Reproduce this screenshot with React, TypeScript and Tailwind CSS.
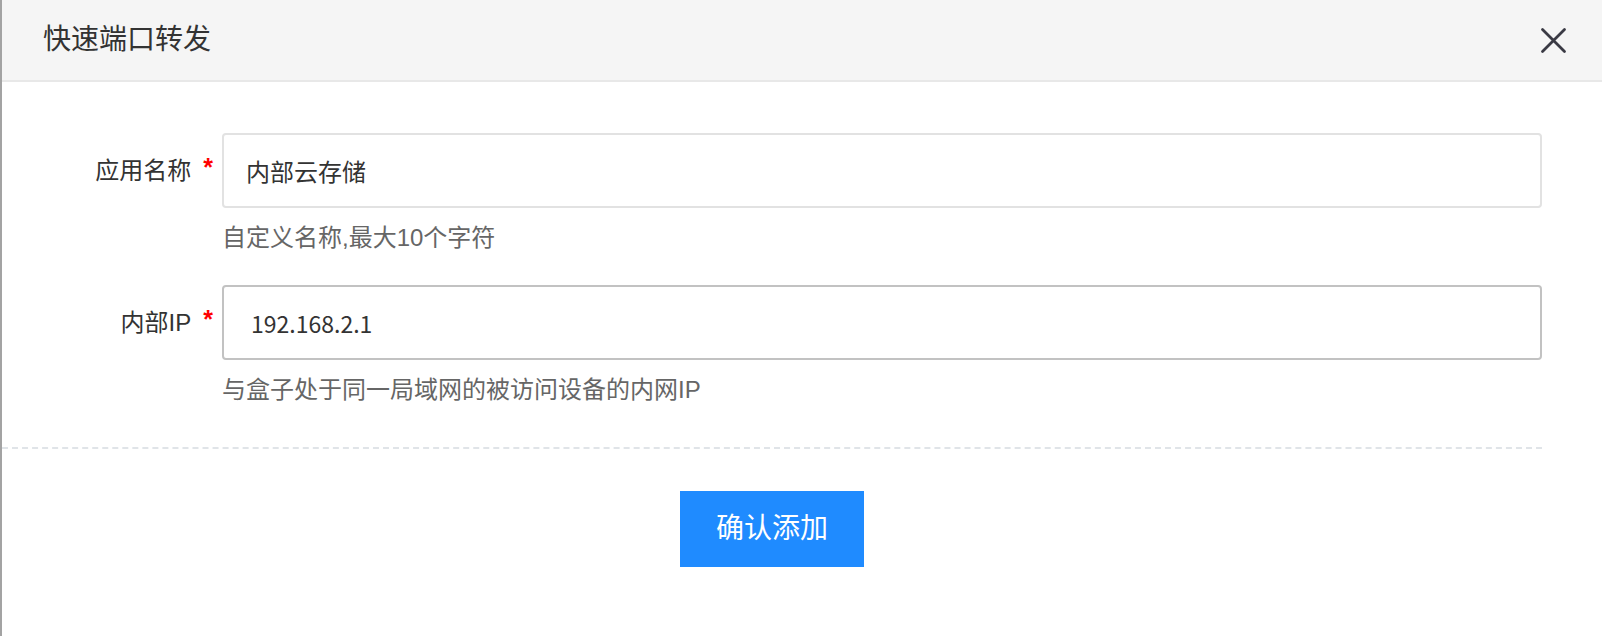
import { useState } from "react";

const Field = ({
  label,
  value,
  hint,
  inputClass,
}: {
  label: string;
  value: string;
  hint: string;
  inputClass: string;
}) => {
  return (
    <div className="flex">
      <div className="w-[220px] shrink-0 h-[75px] flex items-center justify-end pr-[9px]">
        <span className="text-[24px] text-[#333]">{label}</span>
        <span className="self-start mt-[22px] ml-[12px] text-[25px] font-bold leading-none text-[#ff0000]">*</span>
      </div>
      <div className="flex-1">
        <input
          readOnly
          value={value}
          className={`w-full h-[75px] rounded-[4px] border-2 bg-white text-[#333] outline-none ${inputClass}`}
        />
        <div className="mt-[15px] h-[30px] leading-[30px] text-[24px] text-[#666]">{hint}</div>
      </div>
    </div>
  );
};

export default function App() {
  const [name] = useState("内部云存储");
  const [ip] = useState("192.168.2.1");

  return (
    <div className="min-h-screen h-[636px] bg-white border-l-2 border-[#a3a3a3] font-['Liberation_Sans','Noto_Sans_CJK_SC',sans-serif]">
      <header className="h-[82px] bg-[#f5f5f5] border-b-2 border-[#e8e8e8] flex items-center justify-between pl-[41px] pr-[35px]">
        <h1 className="text-[28px] text-[#333]">快速端口转发</h1>
        <button className="w-[27px] h-[27px] flex items-center justify-center">
          <svg width="27" height="27" viewBox="0 0 27 27">
            <path d="M2.5 2.5 L24.5 24.5 M24.5 2.5 L2.5 24.5" stroke="#3a3a44" strokeWidth="2.8" strokeLinecap="round" />
          </svg>
        </button>
      </header>

      <div className="pt-[51px] pr-[60px]">
        <div className="flex flex-col gap-[32px]">
          <Field
            label="应用名称"
            value={name}
            hint="自定义名称,最大10个字符"
            inputClass="border-[#e2e2e2] px-[22px] text-[24px]"
          />
          <Field
            label="内部IP"
            value={ip}
            hint="与盒子处于同一局域网的被访问设备的内网IP"
            inputClass="border-[#c2c2c2] px-[27px] text-[23px] font-['Noto_Sans_CJK_SC',sans-serif]"
          />
        </div>
        <div className="mt-[42px] border-t-2 border-dashed border-[#e0e4e8]"></div>
        <div className="flex justify-center mt-[42px]">
          <button className="w-[184px] h-[76px] bg-[#1f8bff] text-white text-[28px]">确认添加</button>
        </div>
      </div>
    </div>
  );
}
